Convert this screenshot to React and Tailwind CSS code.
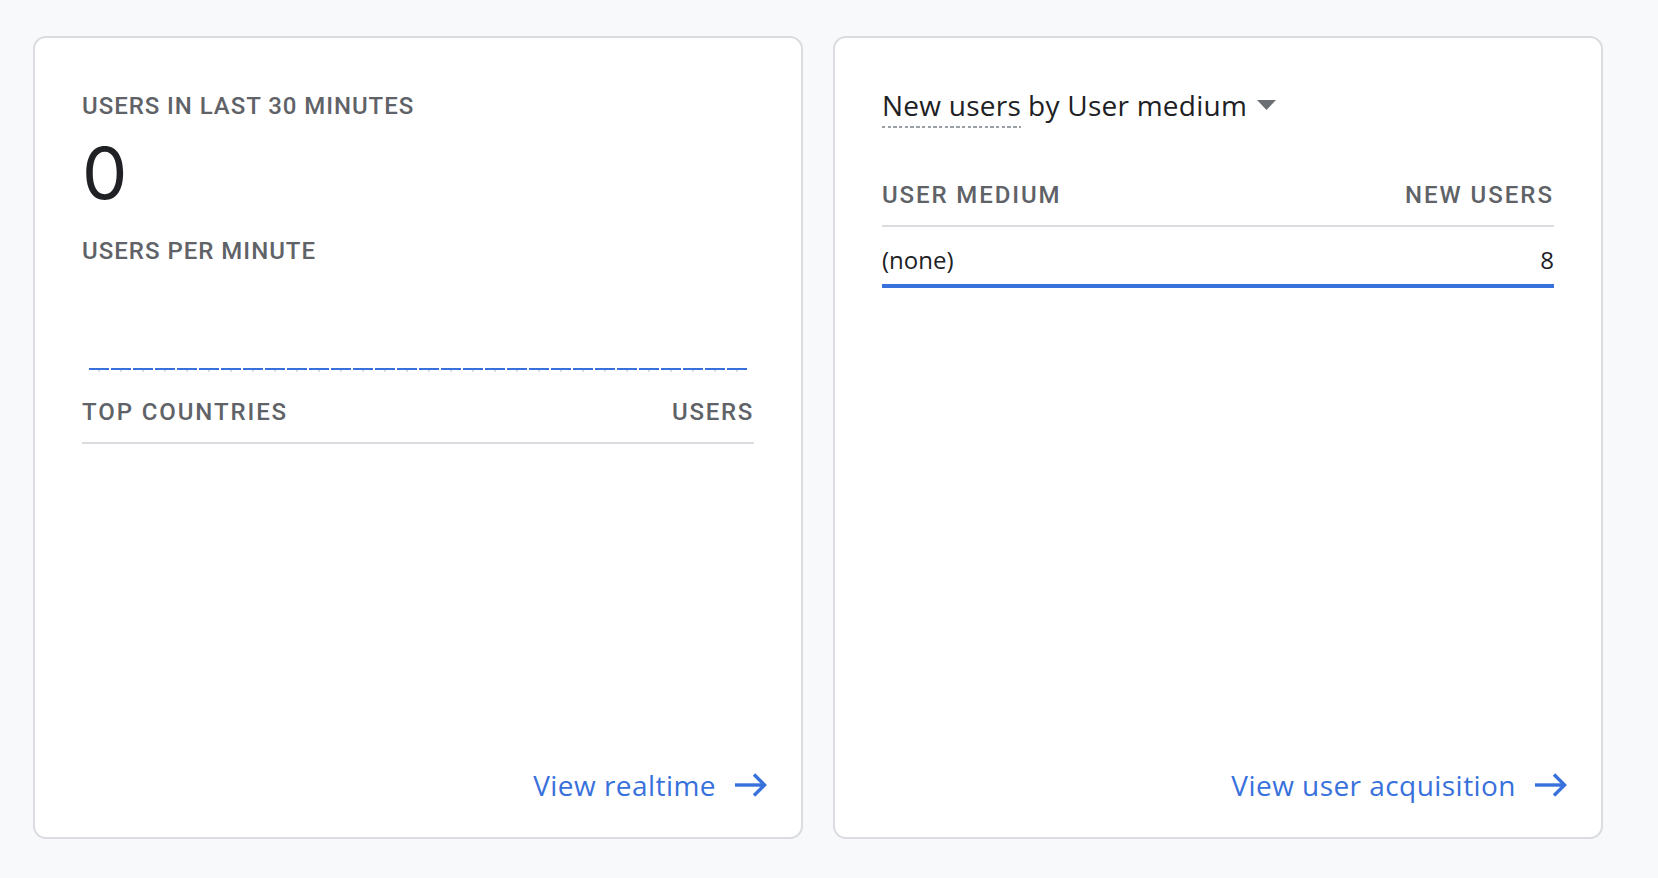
import React from "react";

const bars = Array.from({ length: 30 }, (_, i) => i);

// Long-stemmed arrow used by the card footer links
const ArrowRight = () => (
  <svg width="32" height="24" viewBox="0 0 32 24" fill="none" className="shrink-0">
    <path d="M0 12H29" stroke="currentColor" strokeWidth="3.4" />
    <path d="M19 1.5L29.5 12L19 22.5" stroke="currentColor" strokeWidth="3.4" />
  </svg>
);

const CardLink = ({ label }) => (
  <div className="mt-auto flex justify-end -mr-[13px]">
    <a href="#" className="flex items-center gap-[19px] font-['Open_Sans',sans-serif] text-[28px] leading-[36px] tracking-[0.45px] text-[#3871dc]">
      <span>{label}</span>
      <ArrowRight />
    </a>
  </div>
);

const Label = ({ children, className = "tracking-[1.9px]" }) => (
  <div className={`text-[24px] leading-[32px] font-medium uppercase text-[#5f6368] ${className}`}>
    {children}
  </div>
);

const RealtimeCard = () => (
  <div className="flex flex-col w-[770px] h-[803px] bg-white border-2 border-[#dadce0] rounded-[13px] pt-[52px] pb-[34px] px-[47px]">
    <Label className="tracking-[0.95px]">Users in last 30 minutes</Label>
    <div className="mt-[11px] font-[Inter,sans-serif] text-[72px] leading-[80px] text-[#202124]">0</div>
    <Label className="mt-[22px] tracking-[1px]">Users per minute</Label>

    {/* zero-height per-minute bars */}
    <div className="mt-[101px] ml-[6px] flex w-[660px]">
      {bars.map((i) => (
        <div key={i} className="flex-1 flex flex-col items-center">
          <div className="h-[2px] w-[20px] bg-[#3871dc]" />
          <div className="h-[2px] w-[2px] bg-[#dadce0]" />
        </div>
      ))}
    </div>

    <div className="mt-[24px] flex justify-between pb-[14px] border-b-2 border-[#dadce0]">
      <Label>Top countries</Label>
      <Label className="tracking-[1.7px]">Users</Label>
    </div>

    <CardLink label="View realtime" />
  </div>
);

const AcquisitionCard = () => (
  <div className="flex flex-col w-[770px] h-[803px] bg-white border-2 border-[#dadce0] rounded-[13px] pt-[49px] pb-[34px] px-[47px]">
    <div className="flex items-start font-['Open_Sans',sans-serif] text-[28px] leading-[36px] tracking-[0.25px] text-[#202124]">
      <span className="flex flex-col">
        <span>New users</span>
        <span className="mt-[3px] h-[2px] w-full bg-[repeating-linear-gradient(90deg,#9aa0a6_0_3.4px,transparent_3.4px_5.7px)]" />
      </span>
      <span className="pl-[7px]">by User medium</span>
      <svg width="19" height="10" viewBox="0 0 19 10" className="ml-[10px] mt-[13px] shrink-0">
        <path d="M0 0H19L9.5 10Z" fill="#6b6e72" />
      </svg>
    </div>

    <div className="mt-[51px] flex justify-between pb-[14px] border-b-2 border-[#dadce0]">
      <Label>User medium</Label>
      <Label className="tracking-[2px]">New users</Label>
    </div>

    <div className="pt-[17px] flex justify-between font-['Open_Sans',sans-serif] text-[24px] leading-[32px] text-[#202124]">
      <span>(none)</span>
      <span>8</span>
    </div>
    <div className="mt-[8px] h-[4px] w-full bg-[#3871dc]" />

    <CardLink label="View user acquisition" />
  </div>
);

export default function App() {
  return (
    <div className="min-h-screen bg-[#f8f9fa] font-[Roboto,sans-serif] pt-[36px] pl-[33px]">
      <div className="flex gap-[30px]">
        <RealtimeCard />
        <AcquisitionCard />
      </div>
    </div>
  );
}
